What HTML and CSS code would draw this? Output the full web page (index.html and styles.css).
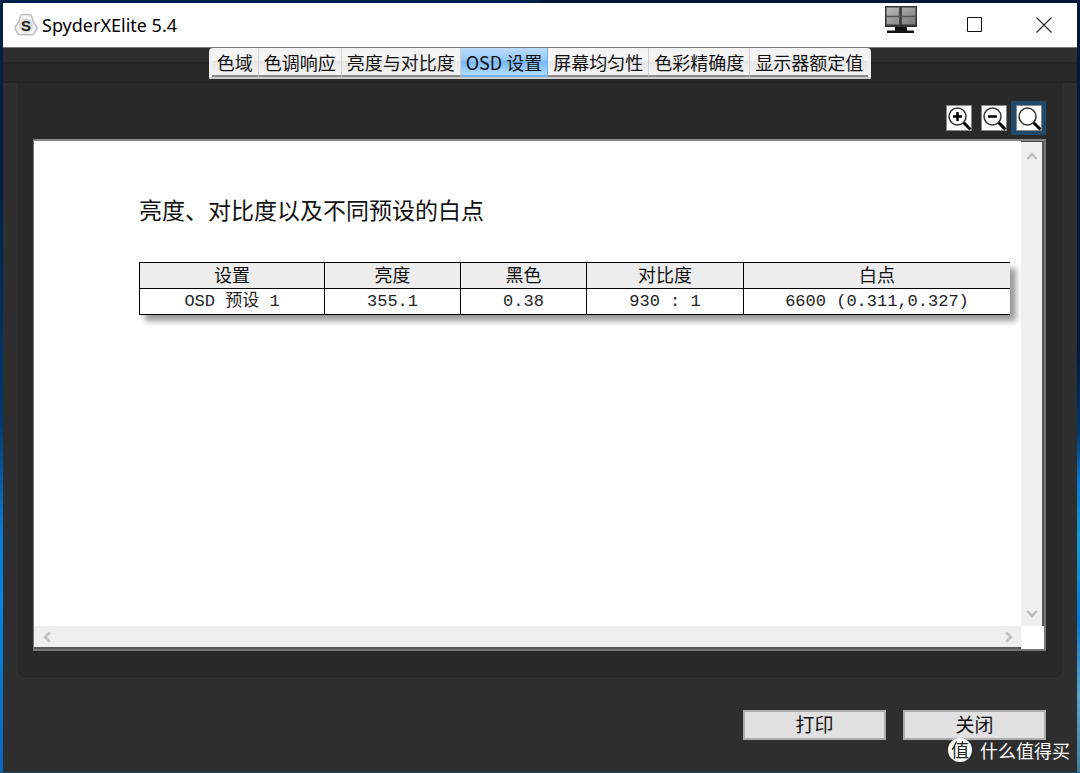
FILE: index.html
```html
<!DOCTYPE html>
<html lang="zh-CN">
<head>
<meta charset="utf-8">
<title>SpyderXElite 5.4</title>
<link rel="stylesheet" href="styles.css">
</head>
<body>
<div class="window">
  <header class="titlebar">
    <svg class="app-icon" width="24" height="24" viewBox="0 0 24 24" aria-hidden="true">
      <path d="M9 1.500h6q2 0 2.700 2l1.300 5 3.500 5q.8 1.500 0 3l-2 3.500q-1 1.800-3 1.800H6.500q-2 0-3-1.800l-2-3.500q-.8-1.500 0-3l3.500-5 1.300-5q.7-2 2.700-2z" fill="#f4f4f4" stroke="#bdbdbd" stroke-width="1.500"/>
      <circle cx="12" cy="12.500" r="7" fill="#dadada"/>
      <text x="12" y="17.500" text-anchor="middle" class="app-letter">S</text>
    </svg>
    <h1 class="title">SpyderXElite 5.4</h1>
    <svg class="monitor" width="32" height="28" viewBox="0 0 32 28" aria-hidden="true">
      <defs><linearGradient id="scr" x1="0" y1="0" x2="1" y2="1"><stop offset="0" stop-color="#bbb"/><stop offset="1" stop-color="#777"/></linearGradient></defs>
      <rect width="32" height="21" fill="#333"/>
      <rect x="1.500" y="1.500" width="29" height="17" fill="url(#scr)"/>
      <path d="M15.500 1v18" stroke="#444" stroke-width="3"/><path d="M1 10.500h30" stroke="#555" stroke-width="1.500"/>
      <path d="M10 21h12v3.500h7V27H2v-2.500h8z" fill="#111"/>
    </svg>
    <div class="caption">
      <button class="cap" aria-label="最大化"><svg width="16" height="16" viewBox="0 0 16 16"><path d="M.5.5h14v14H.5z" fill="none" stroke="#111"/></svg></button>
      <button class="cap" aria-label="关闭窗口"><svg width="16" height="16" viewBox="0 0 16 16"><path d="M.5.5l15 15M15.500.5l-15 15" fill="none" stroke="#222" stroke-width="1.100"/></svg></button>
    </div>
  </header>

  <div class="tabband">
    <nav class="tabs">
      <button class="tab">色域</button>
      <button class="tab">色调响应</button>
      <button class="tab">亮度与对比度</button>
      <button class="tab active">OSD 设置</button>
      <button class="tab">屏幕均匀性</button>
      <button class="tab">色彩精确度</button>
      <button class="tab">显示器额定值</button>
    </nav>
  </div>

  <main class="panel">
    <div class="tools">
      <button class="tool" aria-label="放大"><svg width="26" height="26" viewBox="0 0 26 26"><path d="M.5.5h25v25H.5z" fill="#fff" stroke="#888"/><path d="M17.500 17.500l7 7" stroke="#000" stroke-width="3"/><circle cx="11.500" cy="11.500" r="8.500" fill="none" stroke="#333" stroke-width="1.500"/><path d="M7 11.500h9M11.500 7v9" stroke="#000" stroke-width="2.500"/></svg></button>
      <button class="tool" aria-label="缩小"><svg width="26" height="26" viewBox="0 0 26 26"><path d="M.5.5h25v25H.5z" fill="#fff" stroke="#888"/><path d="M17.500 17.500l7 7" stroke="#000" stroke-width="3"/><circle cx="11.500" cy="11.500" r="8.500" fill="none" stroke="#333" stroke-width="1.500"/><path d="M7 11.500h9" stroke="#000" stroke-width="2.500"/></svg></button>
      <button class="tool selected" aria-label="原始大小"><svg width="26" height="26" viewBox="0 0 26 26"><path d="M.5.5h25v25H.5z" fill="#fff" stroke="#888"/><path d="M17.500 17.500l7 7" stroke="#000" stroke-width="3"/><circle cx="11.500" cy="11.500" r="8.500" fill="none" stroke="#333" stroke-width="1.500"/></svg></button>
    </div>
    <div class="viewer">
      <section class="page">
        <h2 class="heading">亮度、对比度以及不同预设的白点</h2>
        <table class="report">
          <colgroup><col class="c1"><col class="c2"><col class="c3"><col class="c4"><col></colgroup>
          <thead><tr><th>设置</th><th>亮度</th><th>黑色</th><th>对比度</th><th>白点</th></tr></thead>
          <tbody><tr><td>OSD 预设 1</td><td>355.1</td><td>0.38</td><td>930 : 1</td><td>6600 (0.311,0.327)</td></tr></tbody>
        </table>
      </section>
      <div class="vbar">
        <svg width="12" height="10" viewBox="0 0 12 10"><path d="M1.500 8L6 3l4.500 5" fill="none" stroke="#bdbdbd" stroke-width="2.500"/></svg>
        <svg width="12" height="10" viewBox="0 0 12 10"><path d="M1.500 2L6 7l4.500-5" fill="none" stroke="#bdbdbd" stroke-width="2.500"/></svg>
      </div>
      <div class="hbar">
        <svg width="10" height="12" viewBox="0 0 10 12"><path d="M8 1.500L3 6l5 4.500" fill="none" stroke="#bdbdbd" stroke-width="2.500"/></svg>
        <svg width="10" height="12" viewBox="0 0 10 12"><path d="M2 1.500L7 6l-5 4.500" fill="none" stroke="#bdbdbd" stroke-width="2.500"/></svg>
      </div>
    </div>
  </main>

  <footer class="actions">
    <button class="btn">打印</button>
    <button class="btn">关闭</button>
  </footer>
</div>
<div class="watermark"><span class="badge">值</span><span>什么值得买</span></div>
</body>
</html>
```
FILE: styles.css
```css
* { box-sizing: border-box; }
body {
  margin: 0;
  min-height: 100vh;
  padding: 3px 3px 1px;
  display: flex;
  position: relative;
  background:
    linear-gradient(#1f4f6c, #1f4f6c) bottom / 100% 1px no-repeat,
    linear-gradient(#00224a 0 25%, #003a75 55%, #0a78d0 68%, #0a86e0 78%, #0768b8) left / 50% 100% no-repeat,
    linear-gradient(#00193a 0 45%, #003a75 56%, #0a78d0 62%, #1a9ad8 70%, #0a78d0 80%, #5aa5cc 90%, #3f7f9c) right / 50% 100% no-repeat;
  font-family: "Noto Sans CJK SC", sans-serif;
  color: #111;
}
button { font: inherit; color: inherit; border: 0; padding: 0; background: none; }
svg { display: block; }
.window { flex: 1; min-width: 0; display: flex; flex-direction: column; background: #2e2e2e; }

.titlebar { height: 44px; flex: none; display: flex; align-items: center; padding: 0 25px 0 11px; background: #fff; }
.app-letter { font: bold 15px "Liberation Sans", sans-serif; fill: #222; }
.title { margin: 0 auto 0 4px; font: 18px/28px "Noto Sans", sans-serif; color: #000; }
.monitor { margin: 0 50px 10px 0; }
.caption { display: flex; gap: 53px; }
.cap { width: 16px; height: 16px; }

.tabband {
  flex: none; height: 36px; display: flex; justify-content: center; align-items: flex-start;
  background: linear-gradient(#2e2e2e 0 14px, #242424 14px 16px, #292929 16px 33px, #242424 33px);
  border-top: 1px solid #777;
}
.tabs { display: flex; height: 31px; padding: 0 3px; border-bottom: 2px solid #ccc; border-radius: 4px 4px 0 0; background: #f1f1f1; overflow: hidden; }
.tab {
  padding: 0 5px; font-size: 18px; line-height: 26px; white-space: nowrap;
  border-right: 1px solid #d0d0d0; border-bottom: 2px solid #888;
  background: linear-gradient(#f3f3f3, #f6f6f6 45%, #e8e8e8 50%, #f4f4f4);
}
.tab:last-child { border-right: 0; }
.tab.active { background: linear-gradient(#bcdcfb, #96c8fb 45%, #78b6f8 50%, #b4dcff); border-color: #6fb0ef; }

.panel {
  flex: 1; display: flex; flex-direction: column; margin: 0 15px;
  padding: 18px 15px 25px 14px; background: #292929;
  border: 1px solid #242424; border-top: 0; border-radius: 0 0 7px 7px;
}
.tools { display: flex; justify-content: flex-end; margin-bottom: 4px; }
.tool { width: 35px; height: 34px; display: grid; place-items: center; }
.tool.selected { background: #1f4a6c; }

.viewer {
  flex: 1; display: grid; grid-template: minmax(0, 1fr) 23px / minmax(0, 1fr) 23px;
  background: #fff; border: 2px solid #777; border-left-width: 1px; border-top-color: #888;
}
.page { padding: 48px 11px 0 105px; overflow: hidden; }
.heading { margin: 0 0 33px; font-size: 23px; line-height: 40px; font-weight: 400; }
.report {
  width: 100%; table-layout: fixed; border-collapse: collapse; background: #fff;
  font-size: 18px; line-height: 22px; box-shadow: 6px 6px 6px #999;
}
.c1 { width: 185px; } .c2 { width: 136px; } .c3 { width: 126px; } .c4 { width: 157px; }
.report th, .report td { height: 26px; padding: 0; border: 1px solid #000; text-align: center; font-weight: 400; white-space: nowrap; }
.report th { padding-bottom: 3px; background: #ededed; }
.report td { font-family: "Liberation Mono", "Noto Sans CJK SC", monospace; font-size: 17px; color: #222; }
.report tr > :last-child { border-right: 0; }
.vbar, .hbar { display: flex; justify-content: space-between; align-items: center; background: #efefef; }
.vbar { flex-direction: column; padding: 9px 0 7px; border-top: 1px solid #444; border-right: 2px solid #555; }
.hbar { padding: 0 7px 0 8px; border-bottom: 2px solid #555; }

.actions { flex: none; display: flex; justify-content: flex-end; gap: 17px; padding: 33px 31px 32px; }
.btn { width: 143px; height: 30px; padding-bottom: 2px; font-size: 19px; line-height: 24px; background: #e1e1e1; border: 2px solid #adadad; }

.watermark { position: absolute; right: 10px; bottom: 10px; display: flex; align-items: center; gap: 8px; color: #fff; font-size: 18px; line-height: 26px; }
.badge { width: 24px; height: 24px; border-radius: 50%; background: #fff; color: #222; font-size: 18px; line-height: 23px; text-align: center; }
```
